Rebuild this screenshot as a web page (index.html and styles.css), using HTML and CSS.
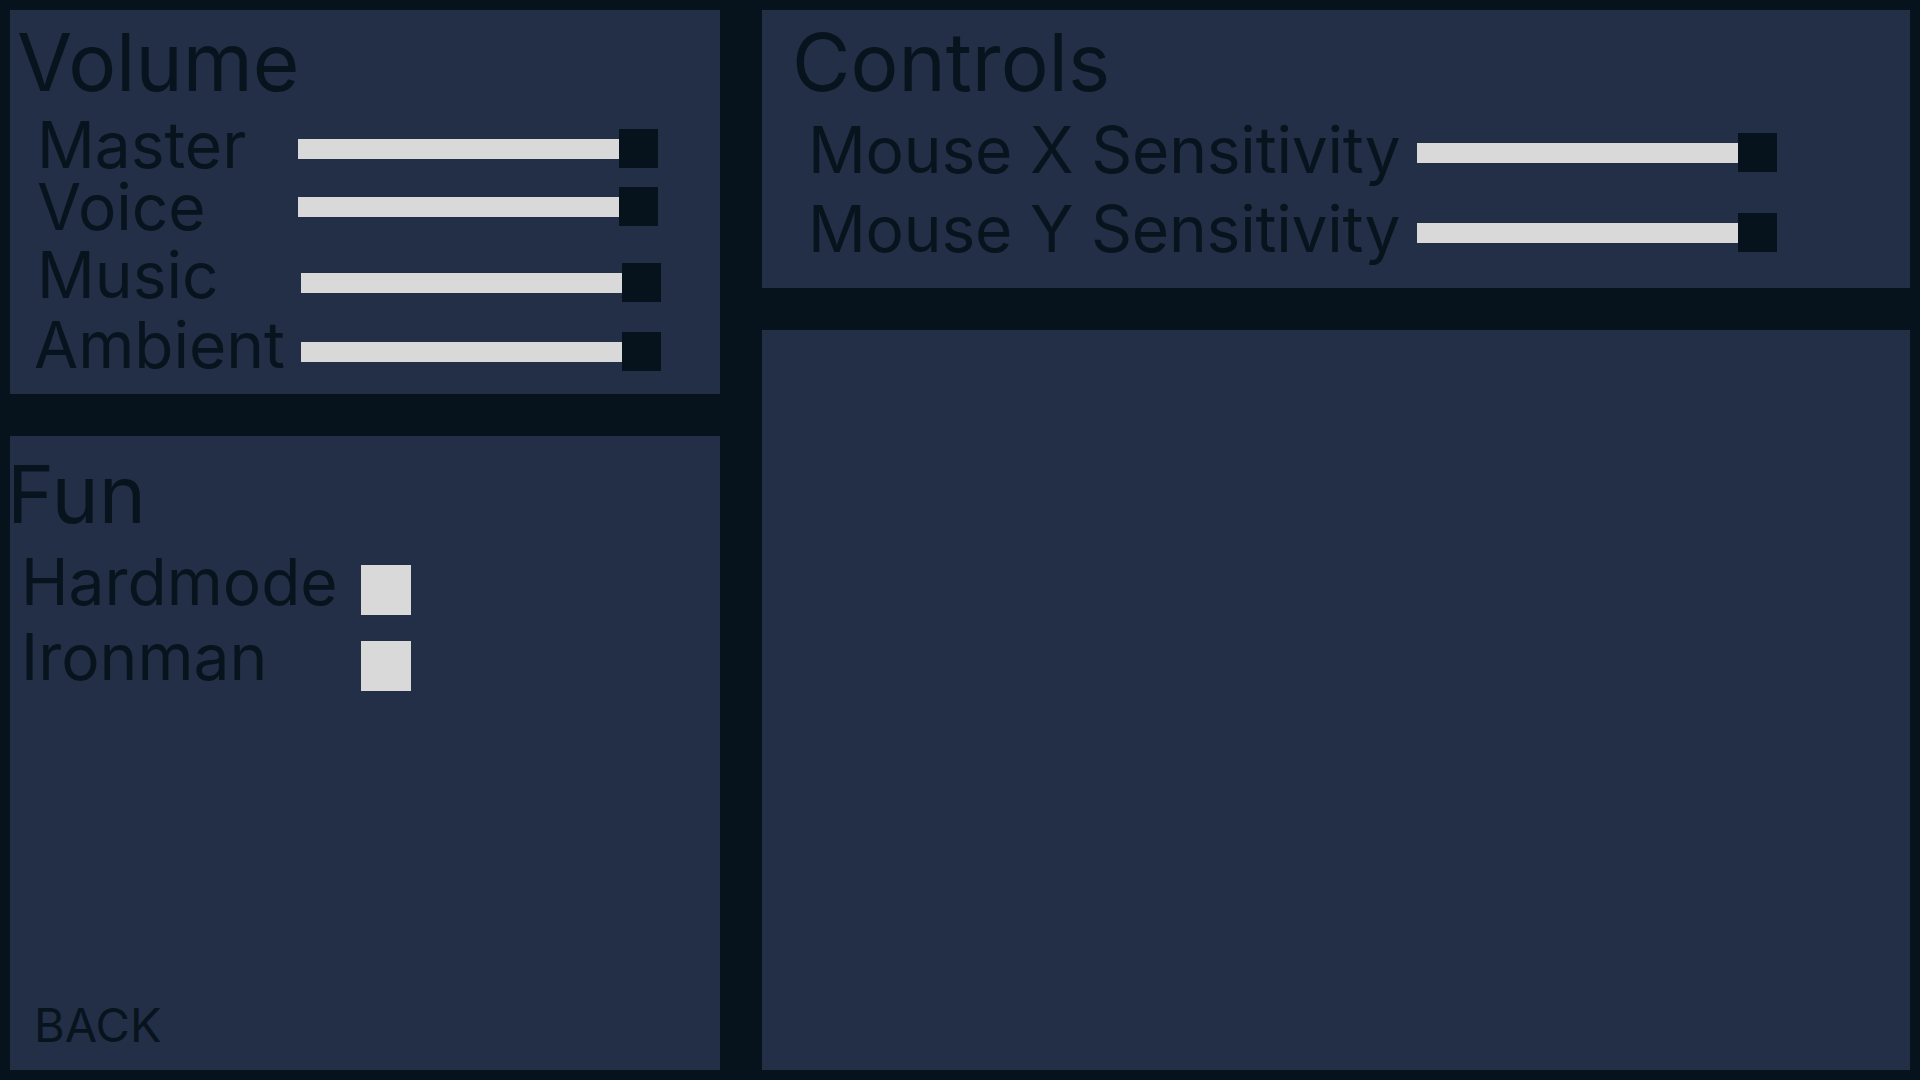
FILE: index.html
```html
<!DOCTYPE html>
<html>
<head>
<meta charset="utf-8">
<link rel="stylesheet" href="styles.css">
</head>
<body>
<div class="screen">
  <div class="column">
    <section class="panel volume">
      <h1 class="title">Volume</h1>
      <div class="row row-master">
        <span class="label">Master</span>
        <div class="slider"><div class="track"></div><div class="handle"></div></div>
      </div>
      <div class="row row-voice">
        <span class="label">Voice</span>
        <div class="slider"><div class="track"></div><div class="handle"></div></div>
      </div>
      <div class="row row-music">
        <span class="label">Music</span>
        <div class="slider"><div class="track"></div><div class="handle"></div></div>
      </div>
      <div class="row row-ambient">
        <span class="label">Ambient</span>
        <div class="slider"><div class="track"></div><div class="handle"></div></div>
      </div>
    </section>
    <section class="panel fun">
      <h1 class="title fun-title">Fun</h1>
      <div class="check-row row-hard">
        <span class="label check-label">Hardmode</span>
        <div class="checkbox"></div>
      </div>
      <div class="check-row row-iron">
        <span class="label check-label">Ironman</span>
        <div class="checkbox"></div>
      </div>
      <div class="back">BACK</div>
    </section>
  </div>
  <div class="column">
    <section class="panel controls">
      <h1 class="title controls-title">Controls</h1>
      <div class="row row-mx">
        <span class="label wide-label">Mouse X Sensitivity</span>
        <div class="slider"><div class="track"></div><div class="handle"></div></div>
      </div>
      <div class="row row-my">
        <span class="label wide-label">Mouse Y Sensitivity</span>
        <div class="slider"><div class="track"></div><div class="handle"></div></div>
      </div>
    </section>
    <section class="panel empty"></section>
  </div>
</div>
</body>
</html>
```

FILE: styles.css
```css
* { box-sizing: border-box; }

html, body {
  margin: 0;
  padding: 0;
  background: #07131c;
}

body {
  font-family: Inter, "Noto Sans", sans-serif;
  color: #08141d;
}

.screen {
  width: 1920px;
  height: 1080px;
  padding: 10px;
  display: grid;
  grid-template-columns: 710px 1148px;
  column-gap: 42px;
}

.column {
  display: flex;
  flex-direction: column;
  gap: 42px;
  min-height: 0;
}

.panel {
  background: #222f46;
  display: flex;
  flex-direction: column;
}

.volume { height: 384px; padding-top: 12px; }
.controls { height: 278px; padding-top: 12px; }
.fun { flex: 1; padding-top: 18px; padding-bottom: 22px; }
.empty { flex: 1; }

.title {
  margin: 0;
  font-size: 80px;
  line-height: 80px;
  font-weight: 400;
  padding-left: 7px;
}

.fun-title { margin-left: -3px; padding-left: 0; }
.controls-title { padding-left: 30px; }

.row {
  display: flex;
  align-items: flex-start;
  padding-left: 27px;
}

.label {
  font-size: 64px;
  line-height: 62px;
  white-space: nowrap;
  width: 261px;
  flex: none;
}

.slider {
  width: 360px;
  height: 39px;
  display: flex;
  align-items: center;
  flex: none;
}

.track {
  flex: 1;
  height: 20px;
  background: #d9d9d9;
}

.handle {
  width: 39px;
  height: 39px;
  background: #07131c;
}

.row-master { margin-top: 12px; }
.row-master .slider { margin-top: 15px; }
.row-voice { margin-top: 0; }
.row-voice .slider { margin-top: 11px; }
.row-music { margin-top: 6px; }
.row-music .slider { margin-top: 19px; margin-left: 3px; }
.row-ambient { margin-top: 8px; }
.row-ambient .slider { margin-top: 18px; margin-left: 3px; }
.row-ambient .label { margin-left: -3px; width: 264px; }

.row-mx, .row-my { padding-left: 46px; }
.wide-label { width: 609px; letter-spacing: -0.2px; }
.row-mx { margin-top: 17px; }
.row-mx .slider { margin-top: 14px; }
.row-my { margin-top: 17px; }
.row-my .slider { margin-top: 15px; }

.check-row {
  display: flex;
  align-items: flex-start;
  padding-left: 11px;
}

.check-label { width: 340px; }

.checkbox {
  width: 50px;
  height: 50px;
  background: #d9d9d9;
  flex: none;
}

.row-hard { margin-top: 17px; }
.row-hard .checkbox { margin-top: 14px; }
.row-iron { margin-top: 11px; }
.row-iron .checkbox { margin-top: 15px; }

.back {
  margin-top: auto;
  font-size: 47px;
  line-height: 47px;
  padding-left: 24px;
}
```
